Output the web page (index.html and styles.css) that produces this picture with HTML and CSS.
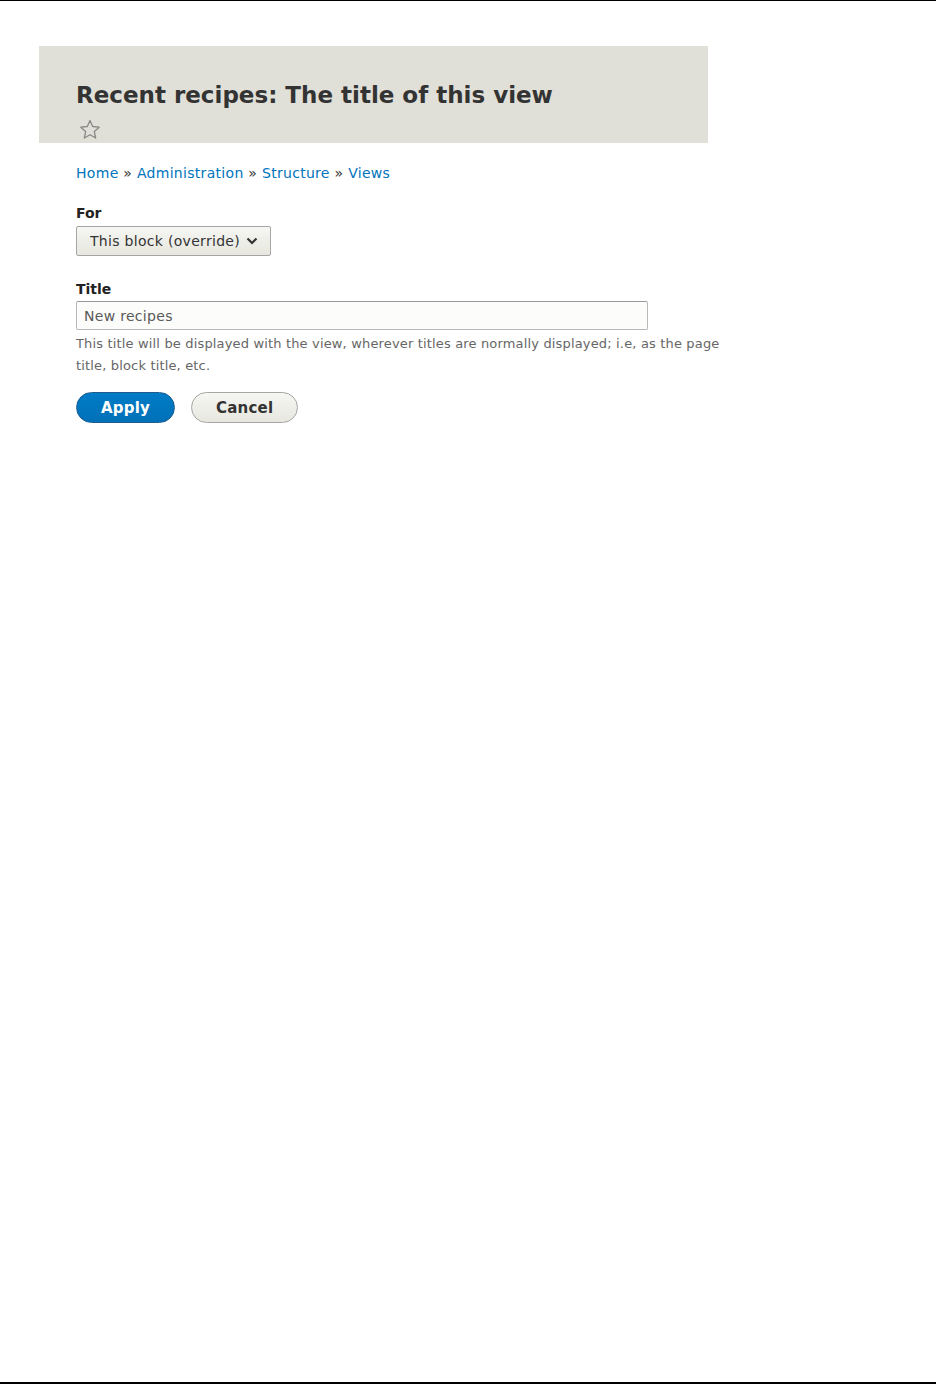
FILE: index.html
```html
<!DOCTYPE html>
<html lang="en">
<head>
    <meta charset="UTF-8">
    <meta name="viewport" content="width=device-width, initial-scale=1.0">
    <title>Recent recipes: The title of this view</title>
    <link rel="stylesheet" href="styles.css">
</head>
<body>
    <div class="frame">
        <!-- Шапка страницы -->
        <header class="page-header">
            <h1 class="page-title">Recent recipes: The title of this view</h1>
            <button class="shortcut" type="button" aria-label="Add to shortcuts">
                <svg width="22" height="22" viewBox="0 0 22 22">
                    <path d="M11 1.5 L13.7 7.5 L20.2 8.2 L15.3 12.6 L16.7 19 L11 15.7 L5.3 19 L6.7 12.6 L1.8 8.2 L8.3 7.5 Z" fill="none" stroke="#8a8a84" stroke-width="1.3" stroke-linejoin="round"/>
                </svg>
            </button>
        </header>

        <main class="content">
            <nav class="breadcrumb">
                <a href="#">Home</a> » <a href="#">Administration</a> » <a href="#">Structure</a> » <a href="#">Views</a>
            </nav>

            <form class="views-form">
                <div class="form-item">
                    <label for="override">For</label>
                    <div class="select-wrap">
                        <select id="override">
                            <option>This block (override)</option>
                        </select>
                        <svg class="chevron" width="12" height="8" viewBox="0 0 12 8">
                            <path d="M1.5 1.5 L6 6 L10.5 1.5" fill="none" stroke="#333" stroke-width="2.2"/>
                        </svg>
                    </div>
                </div>

                <div class="form-item">
                    <label for="title">Title</label>
                    <input id="title" type="text" value="New recipes">
                    <div class="description">This title will be displayed with the view, wherever titles are normally displayed; i.e, as the page title, block title, etc.</div>
                </div>

                <div class="actions">
                    <button type="button" class="btn btn-primary">Apply</button>
                    <button type="button" class="btn">Cancel</button>
                </div>
            </form>
        </main>
    </div>
</body>
</html>
```

FILE: styles.css
```css
/* Общие стили */
html, body {
    height: 100%;
}

body {
    margin: 0;
    background: #fff;
    font-family: "DejaVu Sans", sans-serif;
    color: #222330;
}

.frame {
    box-sizing: border-box;
    min-height: 100%;
    border-top: 1px solid #000;
    border-bottom: 2px solid #000;
    padding: 45px 0 0 39px;
}

/* Шапка */
.page-header {
    width: 669px;
    height: 97px;
    box-sizing: border-box;
    background-color: #e0e0d8;
    padding: 35px 0 0 37px;
}

.page-title {
    margin: 0;
    font-size: 23px;
    line-height: 28px;
    font-weight: bold;
    color: #333;
}

.shortcut {
    display: block;
    margin: 10px 0 0 3px;
    padding: 0;
    border: none;
    background: none;
    width: 22px;
    height: 22px;
}

/* Контент */
.content {
    padding: 0 0 0 37px;
    letter-spacing: 0.3px;
}

.breadcrumb {
    margin-top: 20px;
    font-size: 14px;
    line-height: 20px;
    color: #333;
}

.breadcrumb a {
    color: #0074bd;
    text-decoration: none;
}

.views-form {
    margin-top: 22px;
}

.form-item {
    margin-bottom: 25px;
}

.form-item label {
    display: block;
    font-size: 14px;
    font-weight: bold;
    line-height: 16px;
    margin-bottom: 5px;
    color: #222;
    letter-spacing: 0;
}

/* Выпадающий список */
.select-wrap {
    position: relative;
    display: inline-block;
}

select {
    appearance: none;
    -webkit-appearance: none;
    width: 195px;
    height: 30px;
    box-sizing: border-box;
    padding: 0 30px 0 13px;
    font-family: inherit;
    font-size: 14px;
    letter-spacing: 0.3px;
    color: #333;
    border: 1px solid #a6a6a6;
    border-radius: 2px;
    background: linear-gradient(#f6f6f3, #e7e7df);
}

.chevron {
    position: absolute;
    right: 13px;
    top: 11px;
    pointer-events: none;
}

/* Текстовое поле */
input[type="text"] {
    display: block;
    width: 572px;
    height: 29px;
    margin-top: -1px;
    box-sizing: border-box;
    padding: 0 7px;
    font-family: inherit;
    font-size: 14px;
    letter-spacing: 0.3px;
    color: #595959;
    border: 1px solid #b8b8b8;
    border-top-color: #999;
    border-radius: 2px;
    background: #fcfcfa;
}

.description {
    margin-top: 3px;
    max-width: 660px;
    font-size: 13px;
    line-height: 22px;
    letter-spacing: 0.16px;
    color: #666;
}

/* Кнопки */
.actions {
    display: flex;
    gap: 16px;
    margin-top: -10px;
}

.btn {
    height: 31px;
    padding: 0 24px;
    font-family: inherit;
    font-size: 15px;
    font-weight: bold;
    letter-spacing: 0.2px;
    color: #333;
    border: 1px solid #a6a6a6;
    border-radius: 20px;
    background: linear-gradient(#f6f6f3, #e7e7df);
}

.btn-primary {
    color: #fff;
    border-color: #1e5c90;
    background: linear-gradient(#007bc6, #0071b8);
}
```
